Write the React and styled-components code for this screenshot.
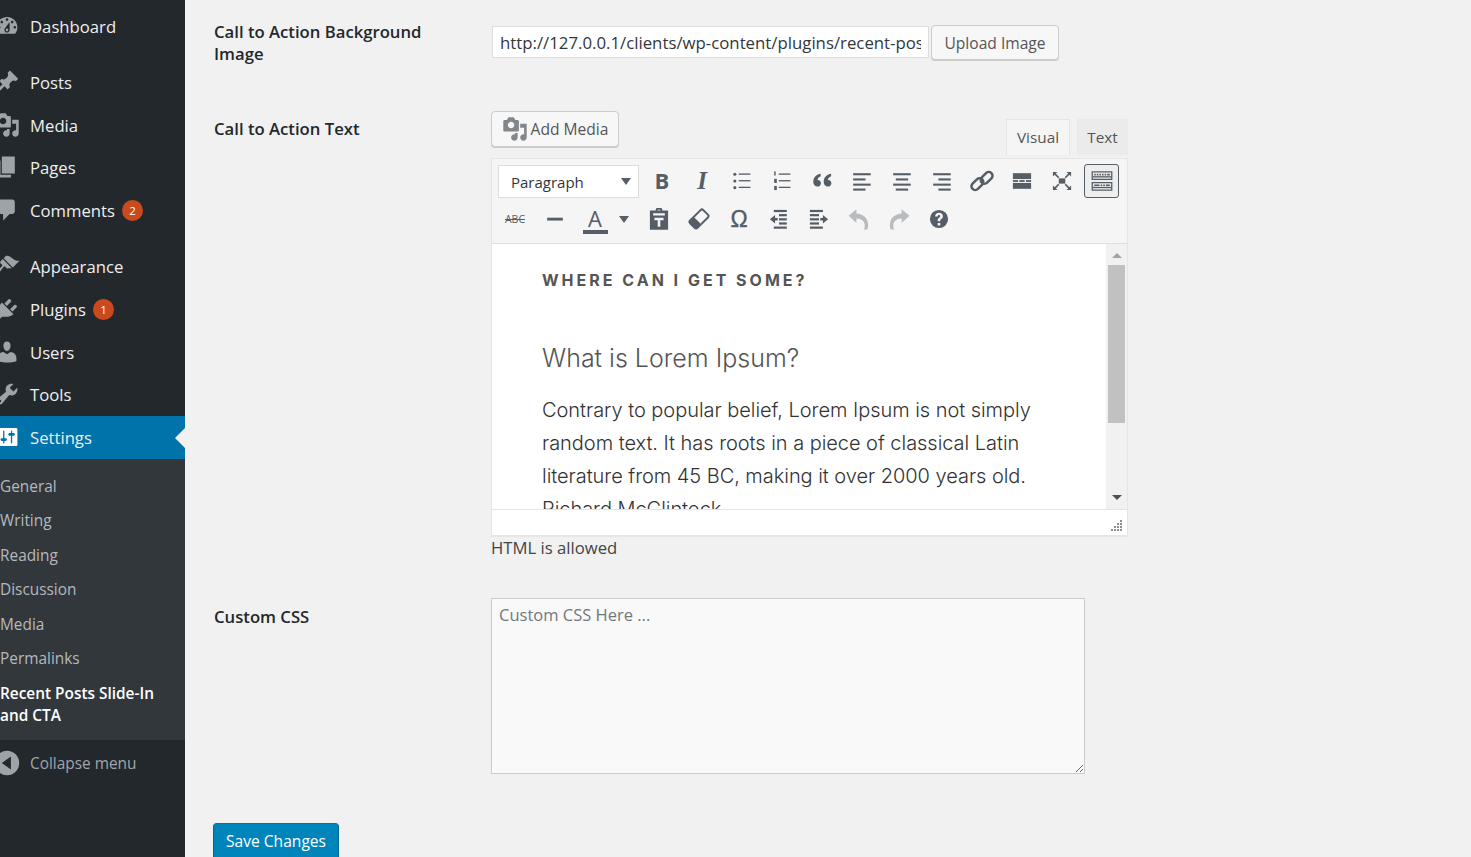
import React from 'react'
import styled, { createGlobalStyle } from 'styled-components'

const GlobalStyle = createGlobalStyle`
  html, body {
    margin: 0;
    padding: 0;
    height: 857px;
    overflow: hidden;
    background: #f1f1f1;
    font-family: "Open Sans", sans-serif;
  }
  * { box-sizing: border-box; }
`

const Page = styled.div`
  display: flex;
  height: 857px;
  overflow: hidden;
`

const Sidebar = styled.nav`
  flex: 0 0 185px;
  background: #23282d;
  padding-top: 5.2px;
`

const MenuRow = styled.div`
  display: flex;
  align-items: center;
  height: 42.67px;
  margin-top: ${p => (p.$gap ? '13.5px' : '0')};
  position: relative;
  font-size: 16.7px;
  color: #eee;
  background: ${p => (p.$active ? '#0073aa' : 'transparent')};
  svg { flex: 0 0 26px; margin: -1px 10px 0 -6px; fill: ${p => (p.$active ? '#fff' : '#9ea3a8')}; }
`

const Notch = styled.span`
  position: absolute;
  right: 0;
  top: 12px;
  border: 10px solid transparent;
  border-left: 0;
  border-right-color: #f1f1f1;
`

const Badge = styled.span`
  width: 21px;
  height: 21px;
  margin-left: 7px;
  border-radius: 50%;
  background: #ca4a1f;
  color: #fff;
  font-size: 11.5px;
  line-height: 21px;
  text-align: center;
`

const SubMenu = styled.div`
  background: #32373c;
  padding: 10.5px 0 14px;
  height: 281px;
`

const SubItem = styled.div`
  font-size: 15.4px;
  line-height: 22px;
  padding: 6.25px 0;
  color: ${p => (p.$current ? '#fff' : '#b4b9be')};
  font-weight: ${p => (p.$current ? 600 : 400)};
`

const CollapseRow = styled(MenuRow)`
  margin-top: 2px;
  color: #a0a5aa;
  font-size: 15.4px;
`

const Main = styled.main`
  flex: 1;
  padding: 21px 0 0 29px;
`

const FormRow = styled.section`
  display: flex;
  margin-top: ${p => p.$top}px;
`

const Label = styled.div`
  flex: 0 0 277px;
  padding: ${p => p.$pad}px 40px 0 0;
  font-size: 16.7px;
  line-height: 22px;
  font-weight: 600;
  color: #23282d;
`

const Field = styled.div`
  display: flex;
  flex-direction: column;
  padding-top: ${p => p.$pad || 0}px;
`

const UrlLine = styled.div`
  display: flex;
  gap: 2px;
  margin-left: 1px;
  align-items: center;
`

const UrlInput = styled.input`
  width: 437px;
  height: 32px;
  margin-bottom: 2px;
  padding: 1px 7px 0;
  border: 1px solid #ddd;
  background: #fff;
  font: 16.8px "Open Sans", sans-serif;
  color: #32373c;
  outline: none;
`

const Button = styled.button`
  display: inline-flex;
  align-items: center;
  justify-content: center;
  height: ${p => p.$h || 35}px;
  width: ${p => p.$w}px;
  padding: 0;
  border: 1px solid #ccc;
  border-radius: 4px;
  background: #f7f7f7;
  box-shadow: 0 1px 0 #ccc;
  color: #555;
  font: 15.6px "Open Sans", sans-serif;
  svg { width: 26px; height: 26px; fill: #82878c; margin-right: 3px; }
`

const MediaButton = styled(Button)`
  align-self: flex-start;
`

const SaveButton = styled(Button)`
  margin: 49px 0 0 -1px;
  height: 42px;
  padding-bottom: 6px;
  background: #0085ba;
  border-color: #0073aa #006799 #006799;
  color: #fff;
  display: flex;
`

const EditorHead = styled.div`
  display: flex;
  justify-content: space-between;
  align-items: flex-end;
  width: 637px;
  height: 44px;
`

const Tabs = styled.div`
  display: flex;
  gap: 7px;
`

const Tab = styled.div`
  height: 36px;
  width: ${p => p.$w}px;
  border: 1px solid ${p => (p.$on ? '#e5e5e5' : '#eaeaea')};
  border-bottom: 0;
  background: ${p => (p.$on ? '#f5f5f5' : '#ebebeb')};
  color: #555;
  font-size: 15.3px;
  line-height: 34px;
  text-align: center;
`

const Editor = styled.div`
  width: 637px;
  height: 378px;
  margin-top: 3px;
  border: 1px solid #e5e5e5;
  background: #fff;
  box-shadow: 0 1px 1px rgba(0, 0, 0, 0.04);
  display: flex;
  flex-direction: column;
`

const Toolbar = styled.div`
  height: 85px;
  flex: none;
  background: #f5f5f5;
  border-bottom: 1px solid #dedede;
  padding: 3px 0 0 3px;
`

const ToolLine = styled.div`
  display: flex;
  align-items: center;
  height: 38px;
`

const Select = styled.div`
  display: flex;
  align-items: center;
  justify-content: space-between;
  width: 141px;
  height: 33px;
  margin: 0 3px 0 3px;
  padding: 1px 7px 0 12px;
  background: #fff;
  border: 1px solid #ddd;
  font-size: 15px;
  color: #32373c;
`

const Caret = styled.span`
  border-top: 7px solid #555d66;
  border-left: 5.5px solid transparent;
  border-right: 5.5px solid transparent;
`

const Tool = styled.div`
  display: flex;
  align-items: center;
  justify-content: center;
  flex: 0 0 ${p => p.$w || 40}px;
  height: 34px;
  margin-right: ${p => p.$mr || 0}px;
  margin-left: ${p => p.$ml || 0}px;
  color: #555d66;
  border: 1px solid ${p => (p.$on ? '#555d66' : 'transparent')};
  border-radius: 3px;
  background: ${p => (p.$on ? '#eee' : 'transparent')};
  svg { width: 26px; height: 26px; fill: ${p => (p.$dim ? '#b9bcbf' : '#555d66')}; }
`

const GlyphB = styled.span`
  font: 700 22px/26px "Open Sans", sans-serif;
  margin-top: -2px;
`

const GlyphI = styled.span`
  font: italic 700 25px "Liberation Serif", serif;
`

const GlyphAbc = styled.span`
  font: 10.5px "Open Sans", sans-serif;
  text-decoration: line-through;
`

const GlyphOmega = styled.span`
  font: 400 23px "Liberation Sans", sans-serif;
  -webkit-text-stroke: 0.4px #555d66;
`

const GlyphA = styled.span`
  font: 22px/24px "Open Sans", sans-serif;
  width: 25px;
  text-align: center;
  border-bottom: 4px solid #555d66;
  margin-top: 1px;
`

const Body = styled.div`
  flex: 1;
  display: flex;
  min-height: 0;
  border-bottom: 1px solid #e5e5e5;
`

const Content = styled.div`
  flex: 1;
  overflow: hidden;
  padding: 25px 0 0 50px;
  font-family: Inter, sans-serif;
  color: #333;
`

const Eyebrow = styled.h3`
  margin: 0;
  font-size: 16px;
  line-height: 22px;
  font-weight: 700;
  letter-spacing: 3px;
  color: #555;
`

const Heading = styled.h2`
  margin: 47px 0 0;
  font-size: 25px;
  line-height: 40px;
  font-weight: 300;
  color: #555;
`

const Para = styled.p`
  margin: 16px 0 0;
  width: 510px;
  font-size: 20px;
  line-height: 33px;
  font-weight: 300;
  letter-spacing: -0.04px;
`

const ScrollBar = styled.div`
  flex: 0 0 21px;
  background: #f1f1f1;
  display: flex;
  flex-direction: column;
  align-items: center;
`

const Thumb = styled.div`
  width: 17px;
  height: 158px;
  background: #c1c1c1;
`

const ArrowUp = styled.span`
  margin: 9px 0 7px;
  border-bottom: 5px solid #a3a3a3;
  border-left: 5px solid transparent;
  border-right: 5px solid transparent;
`

const ArrowDown = styled.span`
  margin-top: auto;
  margin-bottom: 9px;
  border-top: 5px solid #505050;
  border-left: 5px solid transparent;
  border-right: 5px solid transparent;
`

const StatusBar = styled.div`
  height: 25px;
  flex: none;
  display: flex;
  justify-content: flex-end;
  align-items: flex-end;
  padding: 0 4px 3px 0;
  svg { width: 12px; height: 12px; }
`

const Hint = styled.p`
  margin: 1px 0 0;
  font-size: 16.7px;
  line-height: 22px;
  color: #444;
`

const CssBox = styled.textarea`
  width: 594px;
  height: 176px;
  padding: 4px 7px;
  border: 1px solid #ccc;
  background: #f9f9f9;
  font: 16.5px/24px "Open Sans", sans-serif;
  outline: none;
  display: block;
  &::placeholder { color: #72777c; opacity: 1; }
`

const DashIcon = ({ d }) => (
  <svg viewBox="0 0 20 20" width="26" height="26"><path d={d} /></svg>
)

const icons = {
  dashboard: 'M3.76 16h12.48c1.1-1.37 1.76-3.11 1.76-5 0-4.42-3.58-8-8-8s-8 3.58-8 8c0 1.89.66 3.63 1.76 5zM10 4c.55 0 1 .45 1 1s-.45 1-1 1-1-.45-1-1 .45-1 1-1zM6 6c.55 0 1 .45 1 1s-.45 1-1 1-1-.45-1-1 .45-1 1-1zm8 0c.55 0 1 .45 1 1s-.45 1-1 1-1-.45-1-1 .45-1 1-1zm-5.37 5.55L12 7v6c0 1.1-.9 2-2 2s-2-.9-2-2c0-.57.24-1.08.63-1.45zM4 10c.55 0 1 .45 1 1s-.45 1-1 1-1-.45-1-1 .45-1 1-1zm12 0c.55 0 1 .45 1 1s-.45 1-1 1-1-.45-1-1 .45-1 1-1zm-5 3c0-.55-.45-1-1-1s-1 .45-1 1 .45 1 1 1 1-.45 1-1z',
  post: 'M10.44 3.02l1.82-1.82 6.36 6.35-1.83 1.82c-1.05-.68-2.48-.57-3.41.36l-.75.75c-.92.93-1.04 2.35-.35 3.41l-1.83 1.82-2.41-2.41-2.8 2.79c-.42.42-3.38 2.71-3.8 2.29s1.86-3.39 2.28-3.81l2.79-2.79L4.1 9.36l1.83-1.82c1.05.69 2.48.57 3.4-.36l.75-.75c.93-.92 1.05-2.35.36-3.41z',
  media: 'M13 11V4c0-.55-.45-1-1-1h-1.67L9 1H5L3.67 3H2c-.55 0-1 .45-1 1v7c0 .55.45 1 1 1h10c.55 0 1-.45 1-1zM7 4.5c1.38 0 2.5 1.12 2.5 2.5S8.38 9.5 7 9.5 4.5 8.38 4.5 7 5.62 4.5 7 4.5zM14 6h5v10.5c0 1.38-1.12 2.5-2.5 2.5S14 17.88 14 16.5s1.12-2.5 2.5-2.5c.17 0 .34.02.5.05V9h-3V6zm-4 8.05V13h2v3.5c0 1.38-1.12 2.5-2.5 2.5S7 17.88 7 16.5 8.12 14 9.5 14c.17 0 .34.02.5.05z',
  page: 'M6 15V2h10v13H6zm-1 1h8v2H3V5h2v11z',
  comments: 'M5 2h9c1.1 0 2 .9 2 2v7c0 1.1-.9 2-2 2h-2l-5 5v-5H5c-1.1 0-2-.9-2-2V4c0-1.1.9-2 2-2z',
  appearance: 'M14.48 11.06L7.41 3.99l1.5-1.5c.5-.56 2.3-.47 3.51.32 1.21.8 1.43 1.28 2.91 2.1 1.18.64 2.45 1.26 4.45.85zm-.71.71L6.7 4.7 4.93 6.47c-.39.39-.39 1.02 0 1.41l1.06 1.06c.39.39.39 1.03 0 1.42-.6.6-1.43 1.11-2.21 1.69-.35.26-.7.53-1.01.84C1.43 13.23.4 14.96 1.08 15.65c.69.68 2.42-.35 3.76-1.69.31-.31.58-.66.85-1.01.57-.78 1.08-1.61 1.69-2.21.39-.39 1.02-.39 1.41 0l1.06 1.06c.39.39 1.02.39 1.41 0z',
  plugins: 'M13.11 4.36L9.87 7.6 8 5.73l3.24-3.24c.35-.34 1.05-.2 1.56.32.52.51.66 1.21.31 1.55zm-8 1.77l.91-1.12 9.01 9.01-1.19.84c-.71.71-2.63 1.16-3.82 1.16H6.14L4.9 17.26c-.59.59-1.54.59-2.12 0-.59-.58-.59-1.53 0-2.12l1.24-1.24v-3.88c0-1.13.4-3.19 1.09-3.89zm7.26 3.97l3.24-3.24c.34-.35 1.04-.21 1.55.31.52.51.66 1.21.31 1.55l-3.24 3.25z',
  users: 'M10 9.25c-2.27 0-2.73-3.44-2.73-3.44C7 4.02 7.82 2 9.97 2c2.16 0 2.98 2.02 2.71 3.81 0 0-.41 3.44-2.68 3.44zm0 2.57L12.72 10c2.39 0 4.52 2.33 4.52 4.53v2.49s-3.65 1.13-7.24 1.13c-3.65 0-7.24-1.13-7.24-1.13v-2.49c0-2.25 1.94-4.48 4.47-4.48z',
  tools: 'M16.68 9.77c-1.34 1.34-3.3 1.67-4.95.99l-5.41 6.52c-.99.99-2.59.99-3.58 0s-.99-2.59 0-3.57l6.52-5.42c-.68-1.65-.35-3.61.99-4.95 1.28-1.28 3.12-1.62 4.72-1.06l-2.89 2.89 2.82 2.82 2.86-2.87c.53 1.58.18 3.39-1.08 4.65zM3.81 16.21c.4.39 1.04.39 1.43 0 .4-.4.4-1.04 0-1.43-.39-.4-1.03-.4-1.43 0-.39.39-.39 1.03 0 1.43z',
  settings: 'M18 16V4c0-.55-.45-1-1-1H3c-.55 0-1 .45-1 1v12c0 .55.45 1 1 1h14c.55 0 1-.45 1-1zM8 11h1c.55 0 1 .45 1 1s-.45 1-1 1H8v1.5c0 .28-.22.5-.5.5s-.5-.22-.5-.5V13H6c-.55 0-1-.45-1-1s.45-1 1-1h1V5.5c0-.28.22-.5.5-.5s.5.22.5.5V11zm5-2h-1c-.55 0-1-.45-1-1s.45-1 1-1h1V5.5c0-.28.22-.5.5-.5s.5.22.5.5V7h1c.55 0 1 .45 1 1s-.45 1-1 1h-1v5.5c0 .28-.22.5-.5.5s-.5-.22-.5-.5V9z',
  collapse: 'M10 .6a9.4 9.4 0 1 0 0 18.8A9.4 9.4 0 0 0 10 .6zm3 14.4L6 10l7-5v10z',
}

// toolbar icons, 20 unit box like the sidebar ones
const Lines = ({ rows, h = 1.5 }) => rows.map(([x, y, w], i) => <rect key={i} x={x} y={y} width={w} height={h} />)

const ListLines = [[7.5, 4.2, 9], [7.5, 9.3, 9], [7.5, 14.4, 9]]

const BulletIcon = () => (
  <svg viewBox="0 0 20 20">
    <circle cx="4.5" cy="4.8" r="1.2" /><circle cx="4.5" cy="10" r="1.2" /><circle cx="4.5" cy="15.1" r="1.2" />
    <Lines rows={ListLines} h={1} />
  </svg>
)

const NumberIcon = () => (
  <svg viewBox="0 0 20 20">
    <Lines rows={[[4, 2.6, 1.1], [4, 8.3, 2], [4, 13.8, 2]]} h={3.2} />
    <Lines rows={ListLines} h={1} />
  </svg>
)

const QuoteIcon = () => (
  <svg viewBox="0 0 20 20">
    <path d="M9 4.5v1.8C7.3 7 6.6 8 6.5 9.3c1.5-.2 2.7.9 2.7 2.4 0 1.5-1.2 2.6-2.7 2.6-1.8 0-3.2-1.4-3.2-3.7C3.3 7.5 5.5 5 9 4.5z" />
    <path d="M17 4.5v1.8c-1.7.7-2.4 1.7-2.5 3 1.5-.2 2.7.9 2.7 2.4 0 1.5-1.2 2.6-2.7 2.6-1.8 0-3.2-1.4-3.2-3.7 0-3.1 2.2-5.6 5.7-6.1z" />
  </svg>
)

const AlignIcon = ({ rows }) => (
  <svg viewBox="0 0 20 20"><Lines rows={rows} h={1.6} /></svg>
)

const LinkIcon = () => (
  <svg viewBox="0 0 20 20">
    <g fill="none" stroke="#555d66" strokeWidth="1.9">
      <rect x="1.2" y="9.5" width="10.5" height="5.8" rx="2.9" transform="rotate(-45 6.5 12.4)" />
      <rect x="8.3" y="4.7" width="10.5" height="5.8" rx="2.9" transform="rotate(-45 13.5 7.6)" />
    </g>
  </svg>
)

const MoreIcon = () => (
  <svg viewBox="0 0 20 20">
    <rect x="3" y="4" width="14" height="4.5" />
    <rect x="3" y="11.5" width="14" height="4.5" />
    <rect x="3" y="9.3" width="4" height="1.4" /><rect x="8" y="9.3" width="4" height="1.4" /><rect x="13" y="9.3" width="4" height="1.4" />
  </svg>
)

const FullIcon = () => (
  <svg viewBox="0 0 20 20">
    <rect x="7.5" y="8" width="5" height="4" />
    <g stroke="#555d66" strokeWidth="1.3">
      <path d="M4 4l3.5 3.5M16 4l-3.5 3.5M4 16l3.5-3.5M16 16l-3.5-3.5" />
    </g>
    <path d="M3 3h3.5L3 6.5zM17 3h-3.5L17 6.5zM3 17h3.5L3 13.5zM17 17h-3.5l3.5-3.5z" />
  </svg>
)

const SinkIcon = () => (
  <svg viewBox="0 0 20 20">
    <path fillRule="evenodd" d="M2 2.5h16v6.7H2zM3 3.5v4.7h14V3.5zM2 10.8h16v6.7H2zM3 11.8v4.7h14v-4.7z" />
    <rect x="3" y="6.3" width="14" height="1" />
    <rect x="3" y="14.500" width="14" height="1" />
    <path d="M4 4.500h1.200v1.200H4zM6 4.500h1.200v1.200H6zM8 4.500h1.200v1.200H8zM10 4.500h1.200v1.200H10zM12 4.500h1.200v1.200H12zM14 4.500h2v1.200h-2zM4 12.700h4v1.200H4zM9 12.700h1.200v1.200H9zM11 12.700h1.200v1.200H11zM13 12.700h3v1.200h-3z" />
  </svg>
)

const DashIconLine = () => (
  <svg viewBox="0 0 20 20"><rect x="4" y="9" width="12" height="2.2" /></svg>
)

const PasteIcon = () => (
  <svg viewBox="0 0 20 20">
    <path fillRule="evenodd" d="M7.5 3.5V2.700C7.5 2 8 1.500 8.700 1.500h2.600c.7 0 1.200.5 1.200 1.200v.8H17v14.700H3V3.500zM9 3.500h2V2.800H9zM5.500 5.500v1.800h9V5.500zM6.500 9v2h2.500v5h2v-5h2.500V9z" />
  </svg>
)

const EraserIcon = () => (
  <svg viewBox="0 0 20 20">
    <g transform="rotate(-45 10 10)">
      <rect x="2.8" y="6" width="14.400" height="8" rx="1.500" fill="none" stroke="#555d66" strokeWidth="1.500" />
      <rect x="2.8" y="6" width="5.500" height="8" rx="1.500" />
    </g>
  </svg>
)

const OutdentIcon = () => (
  <svg viewBox="0 0 20 20">
    <Lines rows={[[6, 3, 10], [10, 6.200, 6], [10, 9.400, 6], [10, 12.600, 6], [6, 15.800, 10]]} h={1.7} />
    <path d="M3 10.200l4-3.200v2.200h2v2h-2v2.200z" />
  </svg>
)

const IndentIcon = () => (
  <svg viewBox="0 0 20 20">
    <Lines rows={[[3, 3, 10], [3, 6.200, 7], [3, 9.400, 7], [3, 12.600, 7], [3, 15.800, 10]]} h={1.7} />
    <path d="M17 10.200l-4-3.200v2.200h-2v2h2v2.200z" />
  </svg>
)

const UndoIcon = () => (
  <svg viewBox="0 0 20 20">
    <path d="M2 7.500L8 2.500v3.200c5 .3 9 3.300 9 8.800 0 1.500-.2 2.700-.6 3.500h-2.500c.4-1.100.5-2 .5-3 0-3-2.500-5.200-6.400-5.300v3.300z" />
  </svg>
)

const RedoIcon = () => (
  <svg viewBox="0 0 20 20">
    <path d="M18 7.500L12 2.500v3.200c-5 .3-9 3.300-9 8.800 0 1.500.2 2.700.6 3.500h2.500c-.4-1.100-.5-2-.5-3 0-3 2.500-5.200 6.400-5.300v3.300z" />
  </svg>
)

const HelpIcon = () => (
  <svg viewBox="0 0 20 20">
    <path fillRule="evenodd" d="M10 3a7 7 0 1 0 0 14 7 7 0 0 0 0-14zM9 13h2v2H9zM7 8c0-1.700 1.300-2.800 3-2.800s3 1 3 2.600c0 1.300-.7 1.900-1.500 2.400-.4.300-.5.500-.5 1.100v.4H9v-.7c0-1 .4-1.500 1.100-2 .6-.4.900-.6.900-1.100s-.4-.9-1-.9-1 .4-1 1z" />
  </svg>
)

const topMenu = [
  { name: 'Dashboard', icon: 'dashboard' },
  { name: 'Posts', icon: 'post', gap: true },
  { name: 'Media', icon: 'media' },
  { name: 'Pages', icon: 'page' },
  { name: 'Comments', icon: 'comments', badge: 2 },
  { name: 'Appearance', icon: 'appearance', gap: true },
  { name: 'Plugins', icon: 'plugins', badge: 1 },
  { name: 'Users', icon: 'users' },
  { name: 'Tools', icon: 'tools' },
]

const subMenu = ['General', 'Writing', 'Reading', 'Discussion', 'Media', 'Permalinks']

const LEFT = [[3.2, 4, 13.5], [3.2, 8, 9.5], [3.2, 12, 13.5], [3.2, 15.8, 9.5]]
const CENTER = [[3.2, 4, 13.5], [5.2, 8, 9.5], [3.2, 12, 13.5], [5.2, 15.8, 9.5]]
const RIGHT = [[3.2, 4, 13.5], [7.2, 8, 9.5], [3.2, 12, 13.5], [7.2, 15.8, 9.5]]

export default function App() {
  return (
    <Page>
      <GlobalStyle />
      <Sidebar>
        {topMenu.map(item => (
          <MenuRow key={item.name} $gap={item.gap}>
            <DashIcon d={icons[item.icon]} />
            {item.name}
            {item.badge && <Badge>{item.badge}</Badge>}
          </MenuRow>
        ))}
        <MenuRow $active>
          <DashIcon d={icons.settings} />
          Settings
          <Notch />
        </MenuRow>
        <SubMenu>
          {subMenu.map(name => <SubItem key={name}>{name}</SubItem>)}
          <SubItem $current>Recent Posts Slide-In and CTA</SubItem>
        </SubMenu>
        <CollapseRow>
          <DashIcon d={icons.collapse} />
          Collapse menu
        </CollapseRow>
      </Sidebar>
      <Main>
        <FormRow $top={0}>
          <Label $pad={0}>Call to Action Background Image</Label>
          <Field $pad={4}>
            <UrlLine>
              <UrlInput readOnly value="http://127.0.0.1/clients/wp-content/plugins/recent-posts-slide-in/assets/cta.png" />
              <Button $w={128}>Upload Image</Button>
            </UrlLine>
          </Field>
        </FormRow>
        <FormRow $top={46}>
          <Label $pad={7}>Call to Action Text</Label>
          <Field>
            <EditorHead>
              <MediaButton $w={128} $h={36}>
                <DashIcon d={icons.media} />
                Add Media
              </MediaButton>
              <Tabs>
                <Tab $on $w={64}>Visual</Tab>
                <Tab $w={51}>Text</Tab>
              </Tabs>
            </EditorHead>
            <Editor>
              <Toolbar>
                <ToolLine>
                  <Select>Paragraph<Caret /></Select>
                  <Tool><GlyphB>B</GlyphB></Tool>
                  <Tool><GlyphI>I</GlyphI></Tool>
                  <Tool><BulletIcon /></Tool>
                  <Tool><NumberIcon /></Tool>
                  <Tool><QuoteIcon /></Tool>
                  <Tool><AlignIcon rows={LEFT} /></Tool>
                  <Tool><AlignIcon rows={CENTER} /></Tool>
                  <Tool><AlignIcon rows={RIGHT} /></Tool>
                  <Tool><LinkIcon /></Tool>
                  <Tool><MoreIcon /></Tool>
                  <Tool><FullIcon /></Tool>
                  <Tool $w={35} $ml={2} $on><SinkIcon /></Tool>
                </ToolLine>
                <ToolLine>
                  <Tool><GlyphAbc>ABC</GlyphAbc></Tool>
                  <Tool><DashIconLine /></Tool>
                  <Tool><GlyphA>A</GlyphA></Tool>
                  <Tool $w={18} $mr={6}><Caret /></Tool>
                  <Tool><PasteIcon /></Tool>
                  <Tool><EraserIcon /></Tool>
                  <Tool><GlyphOmega>Ω</GlyphOmega></Tool>
                  <Tool><OutdentIcon /></Tool>
                  <Tool><IndentIcon /></Tool>
                  <Tool $dim><UndoIcon /></Tool>
                  <Tool $dim><RedoIcon /></Tool>
                  <Tool><HelpIcon /></Tool>
                </ToolLine>
              </Toolbar>
              <Body>
                <Content>
                  <Eyebrow>WHERE CAN I GET SOME?</Eyebrow>
                  <Heading>What is Lorem Ipsum?</Heading>
                  <Para>
                    Contrary to popular belief, Lorem Ipsum is not simply random text. It has roots in a piece of classical Latin literature from 45 BC, making it over 2000 years old. Richard McClintock
                  </Para>
                </Content>
                <ScrollBar>
                  <ArrowUp />
                  <Thumb />
                  <ArrowDown />
                </ScrollBar>
              </Body>
              <StatusBar>
                <svg viewBox="0 0 12 12" fill="#8c8f94">
                  <path d="M9 0h2v2H9zM6 3h2v2H6zM9 3h2v2H9zM3 6h2v2H3zM6 6h2v2H6zM9 6h2v2H9zM0 9h2v2H0zM3 9h2v2H3zM6 9h2v2H6zM9 9h2v2H9z" />
                </svg>
              </StatusBar>
            </Editor>
            <Hint>HTML is allowed</Hint>
          </Field>
        </FormRow>
        <FormRow $top={39}>
          <Label $pad={8}>Custom CSS</Label>
          <Field>
            <CssBox placeholder="Custom CSS Here ..." />
          </Field>
        </FormRow>
        <SaveButton $w={126}>Save Changes</SaveButton>
      </Main>
    </Page>
  )
}
